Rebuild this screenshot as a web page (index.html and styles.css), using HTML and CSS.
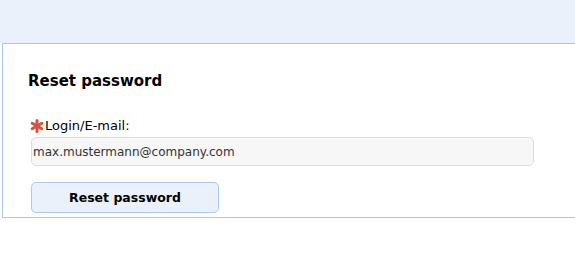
FILE: index.html
```html
<!DOCTYPE html>
<html>
<head>
<meta charset="utf-8">
<link rel="stylesheet" href="styles.css">
</head>
<body>
<div class="topbar"></div>
<div class="panel">
  <h1 class="title">Reset password</h1>
  <form class="form">
    <label class="label" for="login"><svg class="req" width="14" height="14" viewBox="0 0 14 14"><g stroke="#d4533b" stroke-width="3" stroke-linecap="round"><line x1="7" y1="1.5" x2="7" y2="12.5"/><line x1="2.2" y1="4.2" x2="11.8" y2="9.8"/><line x1="2.2" y1="9.8" x2="11.8" y2="4.2"/></g></svg>Login/E-mail:</label>
    <input class="input" id="login" type="text" value="max.mustermann@company.com">
    <button class="btn" type="button">Reset password</button>
  </form>
</div>
</body>
</html>
```
FILE: styles.css
```css
html, body {
  margin: 0;
  padding: 0;
  background: #fff;
  overflow: hidden;
}
body {
  font-family: "DejaVu Sans", Verdana, sans-serif;
  font-size: 13px;
  color: #000;
  width: 575px;
}
.topbar {
  height: 43px;
  background: #eaf1fa;
}
.panel {
  margin-left: 2px;
  width: 573px;
  height: 175px;
  box-sizing: border-box;
  border: 1px solid #a9c7e8;
  border-right: none;
  padding: 27px 0 0 25px;
}
.title {
  margin: 0;
  font-size: 15px;
  font-weight: bold;
  line-height: 20px;
}
.form {
  display: flex;
  flex-direction: column;
  align-items: flex-start;
  margin-top: 26px;
}
.label {
  display: flex;
  align-items: center;
  line-height: 18px;
  padding-left: 2px;
}
.req {
  margin-right: 1px;
  flex: none;
}
.input {
  margin-top: 2px;
  margin-left: 3px;
  width: 503px;
  height: 29px;
  box-sizing: border-box;
  border: 1px solid #dcdcdc;
  border-radius: 5px;
  background: #f7f7f7;
  font-family: inherit;
  font-size: 12px;
  padding: 0 1px;
  color: #333;
}
.btn {
  margin-top: 16px;
  margin-left: 3px;
  width: 188px;
  height: 31px;
  box-sizing: border-box;
  border: 1px solid #a9c9ef;
  border-radius: 5px;
  background: #eaf1fa;
  font-family: inherit;
  font-size: 12.5px;
  font-weight: bold;
  color: #000;
}
```
